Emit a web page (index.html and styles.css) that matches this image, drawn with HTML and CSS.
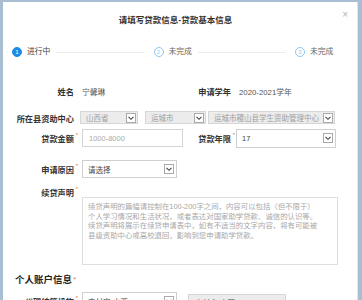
FILE: index.html
```html
<!DOCTYPE html>
<html lang="zh">
<head>
<meta charset="utf-8">
<title>请填写贷款信息</title>
<link rel="stylesheet" href="styles.css">
</head>
<body>
<div class="modal">
  <div class="hd">
    <span class="title">请填写贷款信息-贷款基本信息</span>
    <span class="close">×</span>
  </div>

  <div class="steps">
    <div class="step active"><span class="dot">1</span><span class="st">进行中</span></div>
    <div class="line"></div>
    <div class="step"><span class="dot">2</span><span class="st">未完成</span></div>
    <div class="line"></div>
    <div class="step"><span class="dot">3</span><span class="st">未完成</span></div>
  </div>

  <div class="row r1">
    <label class="lab">姓名</label><span class="val v-left">宁馨琳</span>
    <label class="lab lab-r">申请学年</label><span class="val">2020-2021学年</span>
  </div>

  <div class="row r2">
    <label class="lab">所在县资助中心</label>
    <div class="group">
      <div class="sel gray s1"><span>山西省</span><svg class="arr" viewBox="0 0 10 10"><rect x=".5" y=".5" width="9" height="9" fill="#fff" stroke="#aaa"/><path d="M2.5 3.8l2.5 2.5 2.5-2.5" fill="none" stroke="#444" stroke-width="1.1"/></svg></div>
      <div class="sel gray s2"><span>运城市</span><svg class="arr" viewBox="0 0 10 10"><rect x=".5" y=".5" width="9" height="9" fill="#fff" stroke="#aaa"/><path d="M2.5 3.8l2.5 2.5 2.5-2.5" fill="none" stroke="#444" stroke-width="1.1"/></svg></div>
      <div class="sel gray s3"><span>运城市稷山县学生资助管理中心</span><svg class="arr" viewBox="0 0 10 10"><rect x=".5" y=".5" width="9" height="9" fill="#fff" stroke="#aaa"/><path d="M2.5 3.8l2.5 2.5 2.5-2.5" fill="none" stroke="#444" stroke-width="1.1"/></svg></div>
    </div>
  </div>

  <div class="row r3">
    <label class="lab">贷款金额<span class="star">*</span></label>
    <div class="inp"><span class="ph">1000-8000</span></div>
    <label class="lab lab-r2">贷款年限<span class="star">*</span></label>
    <div class="sel s-year"><span class="txt">17</span><svg class="arr" viewBox="0 0 10 10"><rect x=".5" y=".5" width="9" height="9" fill="#fff" stroke="#aaa"/><path d="M2.5 3.8l2.5 2.5 2.5-2.5" fill="none" stroke="#444" stroke-width="1.1"/></svg></div>
  </div>

  <div class="row r4">
    <label class="lab">申请原因<span class="star">*</span></label>
    <div class="sel s-reason"><span class="txt">请选择</span><svg class="arr" viewBox="0 0 10 10"><rect x=".5" y=".5" width="9" height="9" fill="#fff" stroke="#aaa"/><path d="M2.5 3.8l2.5 2.5 2.5-2.5" fill="none" stroke="#444" stroke-width="1.1"/></svg></div>
  </div>

  <div class="row r5">
    <label class="lab">续贷声明<span class="star">*</span></label>
  </div>
  <div class="ta">续贷声明的篇幅请控制在100-200字之间，内容可以包括（但不限于）<br>个人学习情况和生活状况，或者表达对国家助学贷款、诚信的认识等。<br>续贷声明将展示在续贷申请表中，如有不适当的文字内容，将有可能被<br>县级资助中心或高校退回，影响到您申请助学贷款。</div>

  <h2 class="sec">个人账户信息<span class="star">*</span></h2>

  <div class="row r6">
    <label class="lab">代理结算机构<span class="star">*</span></label>
    <div class="sel s-reason"><span class="txt">支付宝(山西)</span><svg class="arr" viewBox="0 0 10 10"><rect x=".5" y=".5" width="9" height="9" fill="#fff" stroke="#aaa"/><path d="M2.5 3.8l2.5 2.5 2.5-2.5" fill="none" stroke="#444" stroke-width="1.1"/></svg></div>
    <div class="inp gray s-pay"><span class="txt">支付宝(山西)</span></div>
  </div>
</div>
</body>
</html>
```

FILE: styles.css
```css
html, body {
  margin: 0;
  padding: 0;
}
body {
  background: #a9bed3;
  font-family: "Liberation Sans", "Noto Sans CJK SC", sans-serif;
  height: 300px;
  overflow: hidden;
}
.modal {
  margin: 2px 4px 0 3px;
  height: 298px;
  background: #fff;
  overflow: hidden;
  box-shadow: inset -1px 0 0 #e4e4e4;
}
.hd {
  display: grid;
  grid-template-columns: 1fr auto 1fr;
  height: 30px;
  padding-top: 2px;
  align-items: center;
}
.title {
  grid-column: 2;
  font-size: 8.5px;
  font-weight: bold;
  color: #333;
  margin-right: 10px;
}
.close {
  grid-column: 3;
  justify-self: end;
  align-self: start;
  margin: 6px 10px 0 0;
  line-height: 10px;
  font-size: 10px;
  color: #b5b5b5;
}
.steps {
  display: flex;
  align-items: center;
  height: 10px;
  margin-top: 13px;
  padding: 0 24px 0 9px;
}
.step {
  display: flex;
  align-items: center;
  gap: 5px;
}
.dot {
  width: 10px;
  height: 10px;
  border-radius: 50%;
  box-sizing: border-box;
  border: 1px solid #8ec8ef;
  color: #8ec8ef;
  font-size: 6px;
  line-height: 8px;
  text-align: center;
  background: #fff;
}
.step.active .dot {
  background: #1b8de2;
  border-color: #1b8de2;
  color: #fff;
}
.st {
  font-size: 7.8px;
  color: #666;
  line-height: 10px;
  width: 24px;
}
.step.active .st {
  color: #444;
}
.line {
  flex: 1;
  height: 1px;
  background: #ececec;
  margin: 0 9px 0 5px;
}
.row {
  display: flex;
  align-items: center;
}
.lab {
  width: 71px;
  flex: none;
  text-align: right;
  font-size: 8.2px;
  font-weight: bold;
  color: #333;
  margin-right: 8px;
  white-space: nowrap;
}
.star {
  display: inline-block;
  width: 4px;
  margin-right: -4px;
  color: #e8734a;
  font-weight: normal;
  font-size: 6px;
  vertical-align: top;
  text-align: right;
}
.val {
  font-size: 7.8px;
  color: #555;
}
.r1 {
  height: 14px;
  margin-top: 27px;
}
.v-left {
  width: 99px;
}
.lab-r {
  width: 50px;
  margin-left: 0;
  margin-right: 8px;
}
.r2 {
  height: 13px;
  margin-top: 13px;
}
.r2 .lab {
  margin-right: 6px;
}
.group {
  display: flex;
}
.sel {
  display: flex;
  align-items: center;
  justify-content: space-between;
  box-sizing: border-box;
  border: 1px solid #cfcfcf;
  padding: 0 2px 0 5px;
  background: #fff;
  font-size: 7.5px;
}
.sel.gray, .inp.gray {
  background: #ececec;
  border-color: #d6d6d6;
  color: #a0a0a0;
}
.sel.gray {
  height: 13px;
  padding-right: 1px;
}
.s1 { width: 58px; }
.s2 { width: 61px; margin-left: 7px; }
.s3 { width: 127px; margin-left: 2px; }
.arr {
  width: 10px;
  height: 10px;
  flex: none;
}
.txt {
  color: #444;
}
.inp {
  box-sizing: border-box;
  height: 18px;
  border: 1px solid #d4d4d4;
  display: flex;
  align-items: center;
  padding-left: 6px;
  font-size: 7.5px;
}
.ph {
  color: #aaa;
}
.r3 {
  height: 18px;
  margin-top: 5px;
}
.r3 .inp {
  width: 101px;
}
.lab-r2 {
  width: 42px;
  margin-left: 6px;
  margin-right: 5px;
}
.s-year {
  width: 100px;
  height: 19px;
}
.r4 {
  height: 18px;
  margin-top: 13px;
}
.s-reason {
  width: 95px;
  height: 18px;
}
.r5 {
  height: 10px;
  margin-top: 9px;
}
.ta {
  margin-left: 79px;
  width: 256px;
  height: 68px;
  box-sizing: border-box;
  border: 1px solid #dedede;
  padding: 4px 0 0 5px;
  font-size: 7.4px;
  line-height: 9.7px;
  color: #a8a8a8;
  white-space: nowrap;
  overflow: hidden;
}
.sec {
  margin: 9px 0 0 12px;
  height: 12px;
  font-size: 9.5px;
  line-height: 12px;
  font-weight: bold;
  color: #222;
}
.sec .star {
  font-size: 7px;
}
.r6 {
  margin-top: 6px;
  height: 18px;
}
.s-pay {
  width: 98px;
  margin-left: 11px;
  height: 16px;
  align-self: flex-end;
}
```
